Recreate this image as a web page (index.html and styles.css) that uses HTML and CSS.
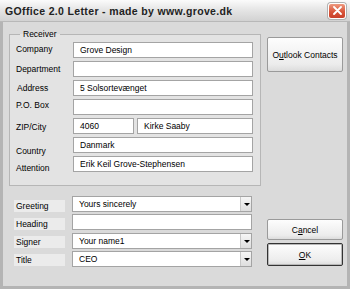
FILE: index.html
```html
<!DOCTYPE html>
<html lang="en">
<head>
    <meta charset="UTF-8">
    <title>GOffice 2.0 Letter</title>
    <link rel="stylesheet" href="styles.css">
</head>
<body>
 <div class="window">
  <div class="titlebar">
   <span class="title">GOffice 2.0 Letter - made by www.grove.dk</span>
   <button class="close"><svg width="9" height="9" viewBox="0 0 9 9"><path d="M1 1L8 8M8 1L1 8" stroke="#fff" stroke-width="1.8" stroke-linecap="round"/></svg></button>
  </div>
  <div class="content">
   <div class="left">
    <fieldset class="receiver">
     <legend>Receiver</legend>
     <div class="labels">
      <span class="lbl l-company">Company</span>
      <span class="lbl l-dept">Department</span>
      <span class="lbl l-address">Address</span>
      <span class="lbl l-pobox">P.O. Box</span>
      <span class="lbl l-zip">ZIP/City</span>
      <span class="lbl l-country">Country</span>
      <span class="lbl l-att">Attention</span>
     </div>
     <div class="fields">
      <div class="field">Grove Design</div>
      <div class="field"></div>
      <div class="field">5 Solsortevænget</div>
      <div class="field"></div>
      <div class="zip-row">
       <div class="field zip">4060</div>
       <div class="field city">Kirke Saaby</div>
      </div>
      <div class="field">Danmark</div>
      <div class="field">Erik Keil Grove-Stephensen</div>
     </div>
    </fieldset>

    <div class="letter">
     <div class="tags">
      <span class="tag">Greeting</span>
      <span class="tag">Heading</span>
      <span class="tag">Signer</span>
      <span class="tag">Title</span>
     </div>
     <div class="combos">
      <div class="field combo"><span>Yours sincerely</span><i class="arrow"></i></div>
      <div class="field"></div>
      <div class="field combo"><span>Your name1</span><i class="arrow"></i></div>
      <div class="field combo"><span>CEO</span><i class="arrow"></i></div>
     </div>
    </div>
   </div>

   <div class="right">
    <button class="btn outlook">O<u>u</u>tlook Contacts</button>
    <div class="actions">
     <button class="btn">C<u>a</u>ncel</button>
     <button class="btn default"><u>O</u>K</button>
    </div>
   </div>
  </div>
 </div>
</body>
</html>
```

FILE: styles.css
```css
body {
    margin: 0;
    font-family: "Liberation Sans", Arial, sans-serif;
    font-size: 8.5px;
    color: #000;
    background: #fff;
}
.window {
    width: 350px;
    height: 289px;
    box-sizing: border-box;
    background: #dadada;
    border: 3px solid #b4b4b4;
    border-top: none;
    display: flex;
    flex-direction: column;
}
.titlebar {
    height: 22px;
    margin: 0 -3px;
    background: linear-gradient(#fbfbfb, #e6e6e6 45%, #d2d2d2);
    border-bottom: 1px solid #b8b8b8;
    box-sizing: border-box;
    display: flex;
    align-items: center;
    padding: 0 4px 0 5px;
}
.title {
    flex: 1;
    font-size: 10.5px;
    font-weight: bold;
    color: #222;
    letter-spacing: 0.35px;
}
.close {
    width: 18px;
    height: 16px;
    padding: 0;
    border: 1px solid #fff;
    border-radius: 3px;
    background: linear-gradient(#ee9a80, #d9553a 55%, #c9402a);
    display: flex;
    align-items: center;
    justify-content: center;
    box-shadow: 0 0 0 1px #b0b0b0;
}
.content {
    flex: 1;
    display: flex;
    padding: 7px 0 0 6px;
}
.left {
    width: 252px;
}
.receiver {
    margin: 0;
    box-sizing: border-box;
    width: 252px;
    border: 1px solid #b6b6b6;
    background: #e3e3e3;
    padding: 3px 6px 12px 6px;
    display: flex;
}
.receiver legend {
    margin-left: 4px;
    padding: 0 3px;
    line-height: 10px;
}
.labels {
    width: 57px;
    display: flex;
    flex-direction: column;
}
.lbl {
    line-height: 10px;
    height: 10px;
}
.l-company { margin-top: 2px; }
.l-dept { margin-top: 10px; }
.l-address { margin-top: 9px; margin-left: 1px; }
.l-pobox { margin-top: 7px; }
.l-zip { margin-top: 12px; }
.l-country { margin-top: 14px; }
.l-att { margin-top: 7px; }
.fields {
    width: 180px;
    display: flex;
    flex-direction: column;
    gap: 3px;
}
.field {
    height: 16px;
    box-sizing: border-box;
    background: #fff;
    border: 1px solid #a4a4a4;
    padding: 0 6px;
    line-height: 14px;
    white-space: nowrap;
    overflow: hidden;
}
.zip-row {
    display: flex;
    gap: 3px;
}
.zip { width: 61px; }
.city { flex: 1; }
.letter {
    display: flex;
    padding-top: 10px;
}
.tags {
    width: 63px;
    display: flex;
    flex-direction: column;
    gap: 6px;
    padding: 4px 0 0 5px;
    box-sizing: border-box;
}
.tag {
    width: 51px;
    height: 12px;
    line-height: 12px;
    background: #ebebeb;
    padding-left: 2px;
    box-sizing: border-box;
}
.combos {
    width: 180px;
    display: flex;
    flex-direction: column;
    gap: 2px;
}
.combos .field:nth-child(3) { margin-top: 1px; }
.combo {
    display: flex;
    padding-right: 0;
}
.combo span { flex: 1; }
.arrow {
    width: 11px;
    height: 14px;
    box-sizing: border-box;
    background: linear-gradient(#f6f6f6, #dedede);
    border-left: 1px solid #c8c8c8;
    position: relative;
}
.arrow::after {
    content: "";
    position: absolute;
    left: 3px;
    top: 6px;
    border-left: 3px solid transparent;
    border-right: 3px solid transparent;
    border-top: 3px solid #000;
}
.right {
    margin-left: 6px;
    width: 76px;
    display: flex;
    flex-direction: column;
    justify-content: space-between;
    padding: 8px 0 20px 0;
}
.btn {
    width: 76px;
    font-family: "Liberation Sans", Arial, sans-serif;
    font-size: 8.5px;
    color: #000;
    background: linear-gradient(#fdfdfd, #ececec 80%, #dcdcdc);
    border: 1px solid #9a9a9a;
    border-radius: 2px;
    padding: 0;
}
.outlook { height: 35px; }
.actions {
    display: flex;
    flex-direction: column;
    gap: 3px;
}
.actions .btn { height: 21px; }
.btn.default {
    height: 23px;
    border: 1px solid #333;
    box-shadow: inset 0 0 0 1px #b8b8b8;
}
```
